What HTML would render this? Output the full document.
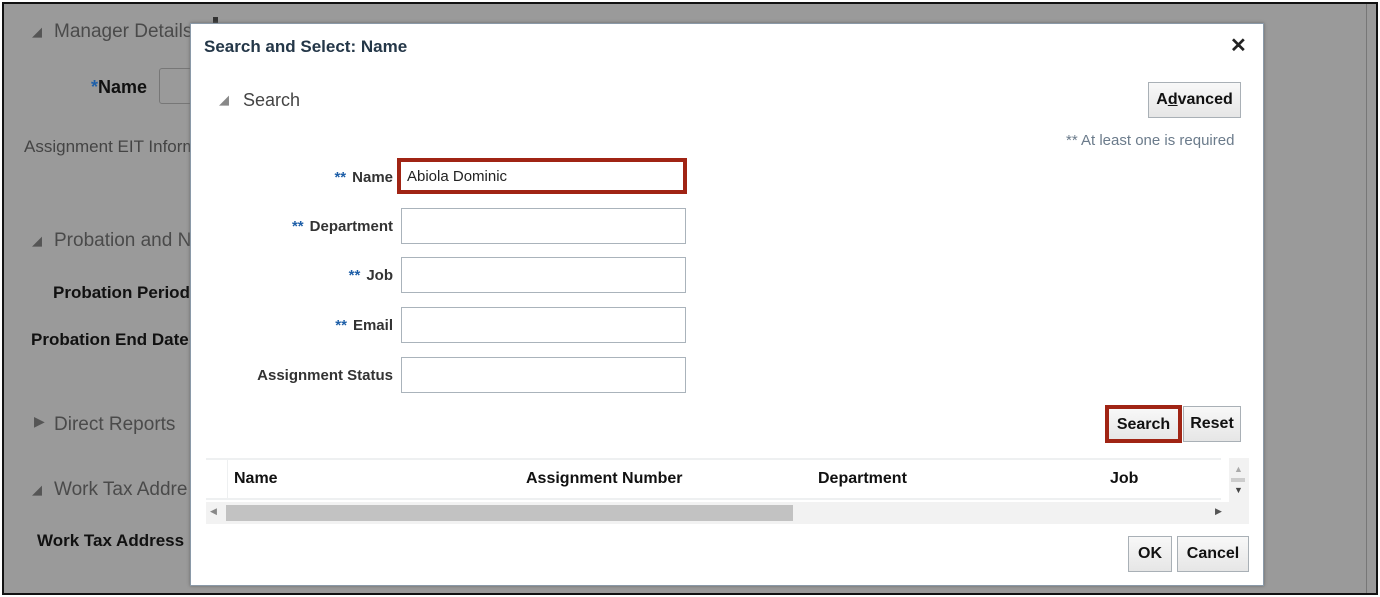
<!DOCTYPE html>
<html><head><style>
*{margin:0;padding:0;box-sizing:border-box}
body{width:1380px;height:597px;overflow:hidden;background:#fff;font-family:"Liberation Sans",Arial,sans-serif;position:relative}
.frame{position:absolute;left:2px;top:2px;width:1376px;height:593px;border:2px solid #111;background:#9a9a9a;overflow:hidden}
.a{position:absolute;white-space:nowrap}
.bg{color:#4a4a4a;font-size:19px}
.bgb{color:#111;font-size:17px;font-weight:bold}
.dlg{position:absolute;left:190px;top:23px;width:1074px;height:563px;background:#fff;border:1px solid #8a99a8;box-shadow:0 0 3px #666}
.lbl{position:absolute;font-size:15px;font-weight:bold;color:#333;text-align:right;width:200px}
.st{color:#1e5fa8;font-weight:bold;margin-right:6px}
.inp{position:absolute;left:210px;width:285px;height:36px;border:1px solid #aab3bb;background:#fff}
.btn{position:absolute;background:linear-gradient(#f8f8f8,#e6e6e6);border:1px solid #a9b0b6;font-weight:bold;font-size:16px;color:#111;text-align:center}
.th{position:absolute;top:469px;font-size:16px;font-weight:bold;color:#111}
</style></head><body>
<div class="frame">
<div class="a" style="left:28px;top:20px;font-size:13px;color:#555">◢</div>
<div class="a bg" style="left:50px;top:17px">Manager Details</div>
<div class="a" style="left:209px;top:13px;width:5px;height:8px;background:#333"></div>
<div class="a" style="left:87px;top:73px;font-size:18px;font-weight:bold;color:#111"><span style="color:#1e5fa8">*</span>Name</div>
<div class="a" style="left:155px;top:64px;width:40px;height:36px;border:1px solid #777;border-radius:3px"></div>
<div class="a" style="left:20px;top:133px;font-size:17px;color:#444">Assignment EIT Inform</div>
<div class="a" style="left:28px;top:229px;font-size:13px;color:#555">◢</div>
<div class="a bg" style="left:50px;top:226px">Probation and N</div>
<div class="a bgb" style="left:49px;top:279px">Probation Period</div>
<div class="a bgb" style="left:27px;top:326px">Probation End Date</div>
<div class="a" style="left:30px;top:409px;font-size:14px;color:#555">▶</div>
<div class="a bg" style="left:50px;top:410px">Direct Reports</div>
<div class="a" style="left:28px;top:478px;font-size:13px;color:#555">◢</div>
<div class="a bg" style="left:50px;top:475px">Work Tax Addre</div>
<div class="a bgb" style="left:33px;top:527px">Work Tax Address</div>
<div class="a" style="left:1362px;top:0;width:1px;height:593px;background:#777"></div>
</div>
<div class="dlg">
<div class="a" style="left:13px;top:13px;font-size:17px;font-weight:bold;color:#243748">Search and Select: Name</div>
<div class="a" style="left:1039px;top:9px;font-size:20px;font-weight:bold;color:#222">✕</div>
<div class="a" style="left:28px;top:68px;font-size:13px;color:#888">◢</div>
<div class="a" style="left:52px;top:66px;font-size:18px;color:#444">Search</div>
<div class="btn" style="left:957px;top:58px;width:93px;height:36px;line-height:34px">A<u>d</u>vanced</div>
<div class="a" style="left:875px;top:108px;font-size:15px;color:#6b7b8b">** At least one is required</div>
<div class="lbl" style="left:2px;top:145px"><span class="st">**</span>Name</div>
<div class="inp" style="left:206px;top:134px;width:290px;height:36px;border:4px solid #a02414;font-size:15px;padding:6px 0 0 6px;color:#222">Abiola Dominic</div>
<div class="lbl" style="left:2px;top:194px"><span class="st">**</span>Department</div>
<div class="inp" style="top:184px"></div>
<div class="lbl" style="left:2px;top:243px"><span class="st">**</span>Job</div>
<div class="inp" style="top:233px"></div>
<div class="lbl" style="left:2px;top:293px"><span class="st">**</span>Email</div>
<div class="inp" style="top:283px"></div>
<div class="lbl" style="left:2px;top:343px">Assignment Status</div>
<div class="inp" style="top:333px"></div>
<div class="btn" style="left:914px;top:381px;width:77px;height:38px;line-height:32px;border:4px solid #a02414">Search</div>
<div class="btn" style="left:992px;top:382px;width:58px;height:36px;line-height:34px">Reset</div>
<div class="a" style="left:15px;top:434px;width:1015px;height:42px;border-top:2px solid #eef0f1;border-bottom:2px solid #eef0f1"></div>
<div class="a" style="left:36px;top:434px;width:1px;height:42px;background:#eef0f1"></div>
<div class="th" style="left:43px;top:446px">Name</div>
<div class="th" style="left:335px;top:446px">Assignment Number</div>
<div class="th" style="left:627px;top:446px">Department</div>
<div class="th" style="left:919px;top:446px">Job</div>
<div class="a" style="left:1038px;top:434px;width:20px;height:66px;background:#f2f2f2"></div>
<div class="a" style="left:1043px;top:440px;font-size:9px;color:#aaa">▲</div>
<div class="a" style="left:1040px;top:454px;width:14px;height:4px;background:#ccc"></div>
<div class="a" style="left:1043px;top:461px;font-size:9px;color:#444">▼</div>
<div class="a" style="left:15px;top:478px;width:1023px;height:22px;background:#f2f2f2"></div>
<div class="a" style="left:35px;top:481px;width:567px;height:16px;background:#c2c2c2"></div>
<div class="a" style="left:19px;top:482px;font-size:9px;color:#888">◀</div>
<div class="a" style="left:1024px;top:482px;font-size:9px;color:#555">▶</div>
<div class="btn" style="left:937px;top:512px;width:44px;height:36px;line-height:34px">OK</div>
<div class="btn" style="left:986px;top:512px;width:72px;height:36px;line-height:34px">Cancel</div>
</div>
</body></html>
